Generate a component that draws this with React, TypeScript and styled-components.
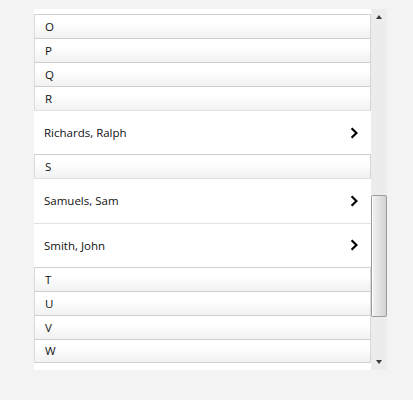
import styled, { createGlobalStyle } from 'styled-components';

interface IEntry {
    kind: 'header' | 'item';
    label: string;
}

const entries: IEntry[] = [
    { kind: 'header', label: 'O' },
    { kind: 'header', label: 'P' },
    { kind: 'header', label: 'Q' },
    { kind: 'header', label: 'R' },
    { kind: 'item', label: 'Richards, Ralph' },
    { kind: 'header', label: 'S' },
    { kind: 'item', label: 'Samuels, Sam' },
    { kind: 'item', label: 'Smith, John' },
    { kind: 'header', label: 'T' },
    { kind: 'header', label: 'U' },
    { kind: 'header', label: 'V' },
    { kind: 'header', label: 'W' },
];

const HEADER_HEIGHT = 24;
const ITEM_HEIGHT = 44.33;

const GlobalStyle = createGlobalStyle`
  html, body {
    margin: 0;
    padding: 0;
    background: #f3f3f3;
  }

  body {
    font-family: "Open Sans", "Noto Sans", sans-serif;
    color: #111;
  }
`;

function Chevron() {
    return (
        <svg width="8" height="12" viewBox="0 0 8 12">
            <path d="M1.6 1.2 L6.4 6 L1.6 10.8" fill="none" stroke="#000" strokeWidth="2.2" strokeLinejoin="miter"/>
        </svg>
    );
}

function App() {
    return (
        <>
            <GlobalStyle/>
            <Page>
                <Frame>
                    <ListViewport>
                        {/* the row above "O" is scrolled off, only its last 5px show */}
                        <ListContent>
                            {entries.map((e) => e.kind === 'header' ? (
                                <GroupHeader key={e.label}>{e.label}</GroupHeader>
                            ) : (
                                <ItemRow key={e.label}>
                                    <span>{e.label}</span>
                                    <Chevron/>
                                </ItemRow>
                            ))}
                        </ListContent>
                    </ListViewport>
                    <ScrollBar>
                        <ArrowButton>
                            <Arrow $up/>
                        </ArrowButton>
                        <Track>
                            <Thumb $top={170} $height={122}/>
                        </Track>
                        <ArrowButton>
                            <Arrow/>
                        </ArrowButton>
                    </ScrollBar>
                </Frame>
            </Page>
        </>
    );
}

const Page = styled.div`
  padding: 9px 0 0 34px;
`;

const Frame = styled.div`
  display: flex;
  width: 353px;
  height: 361px;
`;

const ListViewport = styled.div`
  flex: 1;
  overflow: hidden;
  background: #fff;
`;

const ListContent = styled.div`
  display: flex;
  flex-direction: column;
  padding-top: 5px;
`;

const GroupHeader = styled.div`
  box-sizing: border-box;
  height: ${HEADER_HEIGHT}px;
  flex-shrink: 0;
  display: flex;
  align-items: center;
  padding: 0 0 0 10px;
  border-top: 1px solid #d0d0d0;
  border-left: 1px solid #dadada;
  border-right: 1px solid #d6d6d6;
  background: linear-gradient(to bottom, #ffffff 0%, #ffffff 35%, #f0f1f2 100%);
  font-size: 11.5px;

  &:last-child {
    border-bottom: 1px solid #d0d0d0;
  }
`;

const ItemRow = styled.div`
  box-sizing: border-box;
  height: ${ITEM_HEIGHT}px;
  flex-shrink: 0;
  display: flex;
  align-items: center;
  justify-content: space-between;
  padding: 0 13px 0 10px;
  border-top: 1px solid #e2e2e2;
  background: #fff;
  font-size: 11.5px;

  & > svg {
    flex-shrink: 0;
  }
`;

const ScrollBar = styled.div`
  width: 16px;
  display: flex;
  flex-direction: column;
  background: #ececec;
`;

const ArrowButton = styled.div`
  height: 16px;
  display: flex;
  align-items: center;
  justify-content: center;
`;

const Arrow = styled.div<{ $up?: boolean }>`
  width: 0;
  height: 0;
  border-left: 3.5px solid transparent;
  border-right: 3.5px solid transparent;
  ${p => p.$up ? 'border-bottom: 4px solid #3a3a3a;' : 'border-top: 4px solid #3a3a3a;'}
`;

const Track = styled.div`
  flex: 1;
  position: relative;
`;

const Thumb = styled.div<{ $top: number; $height: number }>`
  position: absolute;
  left: 0;
  right: 0;
  top: ${p => p.$top}px;
  height: ${p => p.$height}px;
  box-sizing: border-box;
  border: 1px solid #9c9c9c;
  border-radius: 2px;
  background: linear-gradient(to right, #f3f3f3 0%, #e6e6e6 40%, #d2d2d2 100%);
  box-shadow: inset 1px 0 0 #ffffff;
`;

export default App;
